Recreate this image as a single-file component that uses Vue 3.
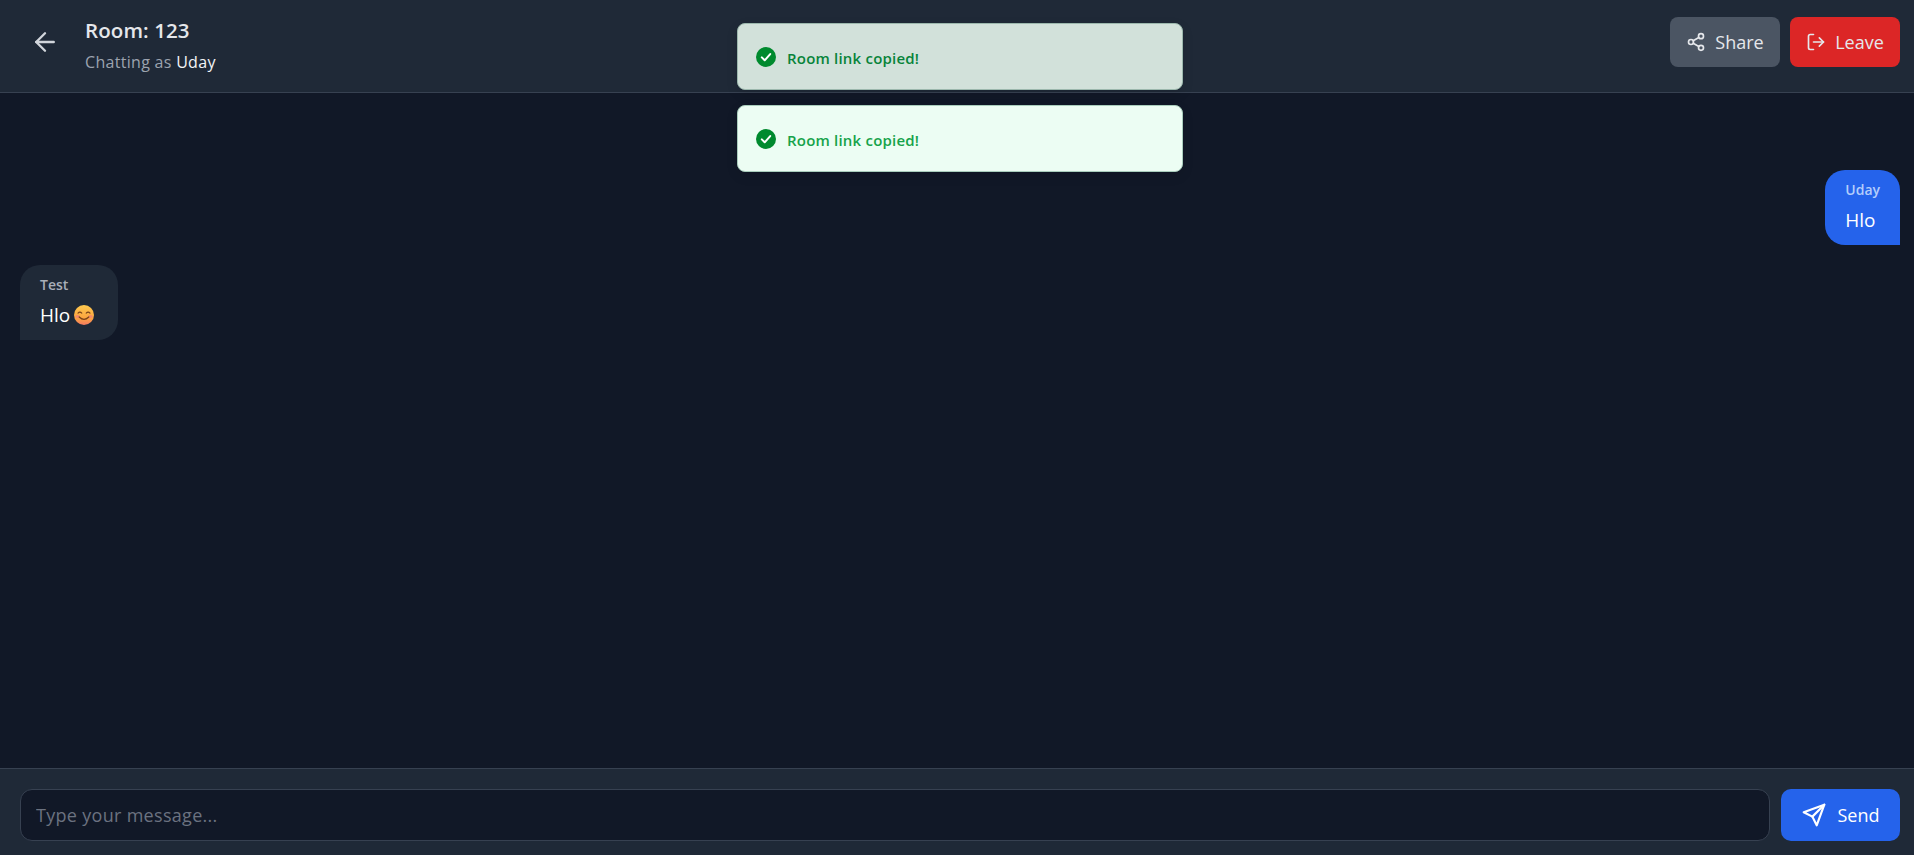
<script setup>
import { ref } from 'vue';

const room = ref('123');
const username = ref('Uday');
const draft = ref('');

const toasts = [
  { id: 1, text: 'Room link copied!', faded: true },
  { id: 2, text: 'Room link copied!', faded: false }
];

const messages = [
  { id: 1, sender: 'Uday', text: 'Hlo', mine: true },
  { id: 2, sender: 'Test', text: 'Hlo', mine: false, emoji: true }
];
</script>

<template>
  <div class="chat-page">
    <header class="chat-header">
      <div class="header-left">
        <button class="back-btn" aria-label="Back">
          <svg width="30" height="30" viewBox="0 0 24 24" fill="none" stroke="currentColor" stroke-width="1.9" stroke-linecap="round" stroke-linejoin="round">
            <path d="M19 12H5" />
            <path d="M12 19l-7-7 7-7" />
          </svg>
        </button>
        <div class="room-info">
          <h1 class="room-title">Room: {{ room }}</h1>
          <p class="room-sub">Chatting as <span class="room-user">{{ username }}</span></p>
        </div>
      </div>
      <div class="header-actions">
        <button class="head-btn share">
          <svg width="20" height="20" viewBox="0 0 24 24" fill="none" stroke="currentColor" stroke-width="2" stroke-linecap="round" stroke-linejoin="round">
            <circle cx="18" cy="5" r="3" />
            <circle cx="6" cy="12" r="3" />
            <circle cx="18" cy="19" r="3" />
            <path d="M8.6 13.5l6.8 4" />
            <path d="M15.4 6.5l-6.8 4" />
          </svg>
          Share
        </button>
        <button class="head-btn leave">
          <svg width="20" height="20" viewBox="0 0 24 24" fill="none" stroke="currentColor" stroke-width="2" stroke-linecap="round" stroke-linejoin="round">
            <path d="M9 21H5a2 2 0 0 1-2-2V5a2 2 0 0 1 2-2h4" />
            <path d="M16 17l5-5-5-5" />
            <path d="M21 12H9" />
          </svg>
          Leave
        </button>
      </div>
    </header>

    <main class="messages">
      <div v-for="msg in messages" :key="msg.id" class="msg-row" :class="{ mine: msg.mine }">
        <div class="bubble">
          <div class="sender">{{ msg.sender }}</div>
          <div class="body">
            {{ msg.text }}
            <svg v-if="msg.emoji" class="emoji" width="20" height="20" viewBox="0 0 20 20">
              <defs>
                <linearGradient id="face" x1="0" y1="0" x2="0" y2="1">
                  <stop offset="0" stop-color="#fdc94f" />
                  <stop offset="0.65" stop-color="#fca53f" />
                  <stop offset="1" stop-color="#f57a62" />
                </linearGradient>
              </defs>
              <circle cx="10" cy="10" r="10" fill="url(#face)" />
              <ellipse cx="3.6" cy="11.6" rx="2.2" ry="1.5" fill="#f58a6a" />
              <ellipse cx="16.4" cy="11.6" rx="2.2" ry="1.5" fill="#f58a6a" />
              <path d="M4 8.2q1.9-2.2 3.8 0M12.2 8.2q1.9-2.2 3.8 0" fill="none" stroke="#7a4318" stroke-width="1.1" stroke-linecap="round" />
              <path d="M5.2 12q4.8 4.6 9.6 0" fill="none" stroke="#7a4318" stroke-width="1.2" stroke-linecap="round" />
            </svg>
          </div>
        </div>
      </div>
    </main>

    <footer class="composer">
      <input v-model="draft" class="msg-input" type="text" placeholder="Type your message..." />
      <button class="send-btn">
        <svg width="26" height="26" viewBox="0 0 24 24" fill="none" stroke="currentColor" stroke-width="2" stroke-linecap="round" stroke-linejoin="round">
          <path d="M21.5 2.5L2.5 9.5l8 4 4 8z" />
          <path d="M21.5 2.5L10.5 13.5" />
        </svg>
        Send
      </button>
    </footer>

    <div class="toaster">
      <div v-for="t in toasts" :key="t.id" class="toast" :class="{ faded: t.faded }">
        <svg class="toast-icon" width="20" height="20" viewBox="0 0 20 20">
          <circle cx="10" cy="10" r="10" fill="#008a2e" />
          <path d="M5.8 10.4l2.9 2.9 5.5-6.2" fill="none" stroke="#fff" stroke-width="2" stroke-linecap="round" stroke-linejoin="round" />
        </svg>
        <span class="toast-text">{{ t.text }}</span>
      </div>
    </div>
  </div>
</template>

<style>
html, body {
  margin: 0;
  background: #111827;
}
</style>

<style scoped>
.chat-page {
  height: 855px;
  display: flex;
  flex-direction: column;
  background: #111827;
  color: #fff;
  font-family: "Open Sans", "Noto Sans", sans-serif;
  position: relative;
  overflow: hidden;
}

.chat-header {
  height: 92px;
  flex-shrink: 0;
  box-sizing: content-box;
  display: flex;
  align-items: flex-start;
  justify-content: space-between;
  padding: 0 14px 0 23px;
  background: #1f2937;
  border-bottom: 1px solid #374151;
}

.header-left {
  height: 84px;
  display: flex;
  align-items: center;
  gap: 18px;
}

.back-btn {
  width: 44px;
  height: 44px;
  padding: 0;
  display: flex;
  align-items: center;
  justify-content: center;
  background: none;
  border: none;
  color: #d1d5db;
}

.room-info {
  padding-top: 6px;
}

.room-title {
  margin: 0;
  font-size: 20.5px;
  line-height: 28px;
  font-weight: 600;
  color: #e5e7eb;
  letter-spacing: 0.1px;
}

.room-sub {
  margin: 6px 0 0;
  font-size: 16px;
  line-height: 24px;
  letter-spacing: 0.3px;
  color: #9ca3af;
}

.room-user {
  color: #f3f4f6;
  font-weight: 500;
}

.header-actions {
  display: flex;
  gap: 10px;
  padding-top: 17px;
}

.head-btn {
  width: 110px;
  height: 50px;
  display: flex;
  align-items: center;
  justify-content: center;
  gap: 9px;
  border: none;
  border-radius: 8px;
  font: inherit;
  font-size: 18px;
  color: #e5e7eb;
}

.share { background: #4b5563; }
.leave { background: #dc2626; }

.messages {
  flex: 1;
  min-height: 0;
  padding: 77px 14px 20px 20px;
  display: flex;
  flex-direction: column;
  gap: 20px;
}

.msg-row {
  display: flex;
  justify-content: flex-start;
}

.msg-row.mine {
  justify-content: flex-end;
}

.bubble {
  box-sizing: border-box;
  height: 75px;
  padding: 10px 20px 0;
  background: #1f2937;
  border-radius: 20px 20px 20px 0;
}

.mine .bubble {
  background: #2563eb;
  border-radius: 20px 20px 0 20px;
}

.sender {
  font-size: 14px;
  line-height: 20px;
  font-weight: 600;
  color: #a8aeb8;
}

.mine .sender {
  color: #b3cdfb;
}

.body {
  margin-top: 6px;
  display: flex;
  align-items: center;
  gap: 4px;
  font-size: 19px;
  line-height: 28px;
  color: #fff;
}

.emoji {
  margin-right: 4px;
}

.composer {
  flex-shrink: 0;
  box-sizing: border-box;
  height: 87px;
  display: flex;
  gap: 11px;
  padding: 20px 14px 14px 20px;
  background: #1f2937;
  border-top: 1px solid #374151;
}

.msg-input {
  flex: 1;
  min-width: 0;
  box-sizing: border-box;
  padding: 0 15px;
  background: #111827;
  border: 1px solid #374151;
  border-radius: 12px;
  outline: none;
  font: inherit;
  font-size: 18px;
  letter-spacing: 0.3px;
  color: #fff;
}

.msg-input::placeholder {
  color: #6b7280;
  opacity: 1;
}

.send-btn {
  width: 119px;
  display: flex;
  align-items: center;
  justify-content: center;
  gap: 10px;
  border: none;
  border-radius: 10px;
  background: #2563eb;
  font: inherit;
  font-size: 18px;
  color: #fff;
}

.toaster {
  position: absolute;
  top: 23px;
  left: 737px;
  width: 446px;
  display: flex;
  flex-direction: column;
  gap: 15px;
}

.toast {
  box-sizing: border-box;
  height: 67px;
  display: flex;
  align-items: center;
  gap: 11px;
  padding: 0 18px;
  background: #ecfdf3;
  border: 1px solid #a9cdbc;
  border-radius: 8px;
  font-size: 15px;
  font-weight: 600;
  letter-spacing: 0.2px;
  color: #16a34a;
  box-shadow: 0 4px 12px rgba(0, 0, 0, 0.1);
}

.toast.faded {
  background: #d2e1da;
  border-color: #9cb8ad;
  color: #08843a;
}

.toast-text {
  padding-top: 3px;
}

.toast-icon {
  flex-shrink: 0;
}
</style>
